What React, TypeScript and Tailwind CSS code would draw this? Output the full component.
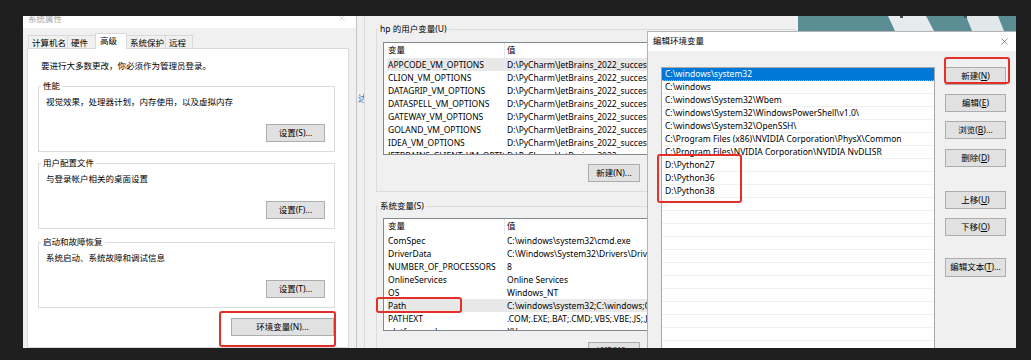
import { X } from "lucide-react";

const userVars: [string, string][] = [
  ["APPCODE_VM_OPTIONS", "D:\\PyCharm\\JetBrains_2022_success\\vmoptions\\appcode.vmoptions"],
  ["CLION_VM_OPTIONS", "D:\\PyCharm\\JetBrains_2022_success\\vmoptions\\clion.vmoptions"],
  ["DATAGRIP_VM_OPTIONS", "D:\\PyCharm\\JetBrains_2022_success\\vmoptions\\datagrip.vmoptions"],
  ["DATASPELL_VM_OPTIONS", "D:\\PyCharm\\JetBrains_2022_success\\vmoptions\\dataspell.vmoptions"],
  ["GATEWAY_VM_OPTIONS", "D:\\PyCharm\\JetBrains_2022_success\\vmoptions\\gateway.vmoptions"],
  ["GOLAND_VM_OPTIONS", "D:\\PyCharm\\JetBrains_2022_success\\vmoptions\\goland.vmoptions"],
  ["IDEA_VM_OPTIONS", "D:\\PyCharm\\JetBrains_2022_success\\vmoptions\\idea.vmoptions"],
  ["JETBRAINS_CLIENT_VM_OPTIONS", "D:\\PyCharm\\JetBrains_2022_success\\vmoptions\\client.vmoptions"],
];

const sysVars: [string, string][] = [
  ["ComSpec", "C:\\windows\\system32\\cmd.exe"],
  ["DriverData", "C:\\Windows\\System32\\Drivers\\DriverData"],
  ["NUMBER_OF_PROCESSORS", "8"],
  ["OnlineServices", "Online Services"],
  ["OS", "Windows_NT"],
  ["Path", "C:\\windows\\system32;C:\\windows;C:\\windows\\System32\\Wbem;"],
  ["PATHEXT", ".COM;.EXE;.BAT;.CMD;.VBS;.VBE;.JS;.JSE;.WSF;.WSH;.MSC"],
  ["platformcode", "KV"],
];

const paths = [
  "C:\\windows\\system32",
  "C:\\windows",
  "C:\\windows\\System32\\Wbem",
  "C:\\windows\\System32\\WindowsPowerShell\\v1.0\\",
  "C:\\windows\\System32\\OpenSSH\\",
  "C:\\Program Files (x86)\\NVIDIA Corporation\\PhysX\\Common",
  "C:\\Program Files\\NVIDIA Corporation\\NVIDIA NvDLISR",
  "D:\\Python27",
  "D:\\Python36",
  "D:\\Python38",
];

function Btn({ children, className = "" }: { children: React.ReactNode; className?: string }) {
  return (
    <div
      className={
        "flex items-center justify-center h-[18px] bg-[#e1e1e1] border border-[#adadad] whitespace-nowrap leading-none " +
        className
      }
    >
      {children}
    </div>
  );
}

function Group({ title, desc, btn, className = "" }: { title: string; desc: string; btn: string; className?: string }) {
  return (
    <fieldset className={"border border-[#dcdcdc] flex flex-col " + className}>
      <legend className="ml-[2px] px-[2px] leading-[12px]">{title}</legend>
      <div className="ml-[7px] mt-[4px] leading-[12px]">{desc}</div>
      <Btn className="self-end w-[59px] mt-[16px] mb-[9px] mr-[9px]">{btn}</Btn>
    </fieldset>
  );
}

function VarList({ rows, selected }: { rows: [string, string][]; selected: number }) {
  return (
    <div className="ml-[6px] w-[400px] h-[113px] bg-white border border-[#828790] overflow-hidden flex flex-col">
      <div className="flex h-[15px] items-center shrink-0">
        <div className="w-[120px] pl-[4px]">变量</div>
        <div className="h-full flex items-center border-l border-[#e5e5e5] pl-[2px]">值</div>
      </div>
      {rows.map(([n, v], i) =>
        i === selected ? (
          <div key={n} className="flex h-[13px] leading-[13px] shrink-0 whitespace-nowrap bg-[#e8e8e8] ml-[3px]">
            <div className="w-[117px] pl-[1px] overflow-hidden">{n}</div>
            <div className="pl-[3px]">{v}</div>
          </div>
        ) : (
          <div key={n} className="flex h-[13px] leading-[13px] shrink-0 whitespace-nowrap">
            <div className="w-[120px] pl-[4px] overflow-hidden">{n}</div>
            <div className="pl-[3px]">{v}</div>
          </div>
        ),
      )}
    </div>
  );
}

function LeftWindow() {
  const tabs: [string, number, boolean][] = [
    ["计算机名", 40, false],
    ["硬件", 29, false],
    ["高级", 32, true],
    ["系统保护", 40, false],
    ["远程", 28, false],
  ];
  return (
    <div className="absolute left-[23px] top-[16px] w-[333px] h-[332px] flex flex-col bg-[#f0f0f0] overflow-hidden">
      <div className="h-[12px] shrink-0 bg-white flex justify-between pl-[5px] pr-[9px] overflow-hidden text-[#a8a8a8]">
        <span className="leading-[8px] -mt-[1px]">系统属性</span>
        <X size={10} strokeWidth={1} className="-mt-[3px]" />
      </div>
      <div className="flex-1 flex flex-col pl-[4px] pr-[7px] pt-[5px]">
        <div className="flex items-end h-[15px] pl-[1px]">
          {tabs.map(([t, w, sel], i) => (
            <div
              key={t}
              style={{ width: w }}
              className={
                "border border-b-0 border-[#d9d9d9] whitespace-nowrap " +
                (i > 0 ? "-ml-px " : "") +
                (sel
                  ? "h-[16px] -mb-px bg-white relative z-10 pl-[4px] leading-[14px]"
                  : "h-[13px] bg-[#f0f0f0] pl-[3px] leading-[13px]")
              }
            >
              {t}
            </div>
          ))}
        </div>
        <div className="flex-1 bg-white border border-[#d9d9d9] flex flex-col pl-[10px] pr-[13px] pt-[11px]">
          <div className="ml-[3px] leading-[12px]">要进行大多数更改，你必须作为管理员登录。</div>
          <Group className="mt-[8px]" title="性能" desc="视觉效果，处理器计划，内存使用，以及虚拟内存" btn="设置(S)..." />
          <Group className="mt-[5px]" title="用户配置文件" desc="与登录帐户相关的桌面设置" btn="设置(F)..." />
          <Group className="mt-[7px]" title="启动和故障恢复" desc="系统启动、系统故障和调试信息" btn="设置(T)..." />
          <Btn className="self-end w-[103px] mt-[10px] mr-[1px]">环境变量(N)...</Btn>
        </div>
      </div>
    </div>
  );
}

function MiddleWindow() {
  return (
    <div className="absolute left-[364px] top-[16px] w-[434px] h-[332px] bg-[#f0f0f0] border-l border-[#dadada] overflow-hidden flex flex-col pl-[11px]">
      <fieldset className="mt-[7px] w-[420px] border border-[#dcdcdc] flex flex-col">
        <legend className="ml-[1px] px-[2px] leading-[12px]">hp 的用户变量(U)</legend>
        <div className="mt-[7px]">
          <VarList rows={userVars} selected={0} />
        </div>
        <div className="flex gap-[7px] ml-[211px] mt-[9px] mb-[9px]">
          <Btn className="w-[52px]">新建(N)...</Btn>
          <Btn className="w-[52px]">编辑(E)...</Btn>
          <Btn className="w-[52px]">删除(D)</Btn>
        </div>
      </fieldset>
      <fieldset className="mt-[8px] w-[420px] border border-[#dcdcdc] flex flex-col">
        <legend className="ml-[1px] px-[2px] leading-[12px]">系统变量(S)</legend>
        <div className="mt-[6px]">
          <VarList rows={sysVars} selected={5} />
        </div>
        <div className="flex gap-[7px] ml-[211px] mt-[11px] mb-[9px]">
          <Btn className="w-[52px]">新建(W)...</Btn>
          <Btn className="w-[52px]">编辑(I)...</Btn>
          <Btn className="w-[52px]">删除(L)</Btn>
        </div>
      </fieldset>
    </div>
  );
}

function Mn({ label, k, tail = "" }: { label: string; k: string; tail?: string }) {
  return (
    <span>
      {label}(<span className="underline">{k}</span>){tail}
    </span>
  );
}

function RightWindow() {
  const rows = [...paths, ...Array(14).fill("")];
  return (
    <div className="absolute left-[647px] top-[31px] w-[369px] h-[317px] flex flex-col bg-[#f0f0f0] border-l border-t border-[#b4b4b4] overflow-hidden">
      <div className="h-[19px] shrink-0 bg-white flex items-center justify-between pl-[5px] pr-[6px]">
        <span>编辑环境变量</span>
        <X size={11} strokeWidth={1.2} className="text-[#333]" />
      </div>
      <div className="flex-1 flex pl-[13px] pt-[16px]">
        <div className="w-[274px] h-[330px] bg-white border border-[#a8a8a8] flex flex-col">
          {rows.map((p, i) => (
            <div
              key={i}
              className={
                "h-[13px] shrink-0 leading-[12px] pl-[3px] whitespace-nowrap border-b " +
                (i === 0 ? "bg-[#0078d7] text-white border-dotted border-[#e9a25a]" : "border-[#f0f0f0]")
              }
            >
              {p}
            </div>
          ))}
        </div>
        <div className="ml-[10px] w-[61px] flex flex-col">
          <Btn>
            <Mn label="新建" k="N" />
          </Btn>
          <Btn className="mt-[9px]">
            <Mn label="编辑" k="E" />
          </Btn>
          <Btn className="mt-[9px]">
            <Mn label="浏览" k="B" tail="..." />
          </Btn>
          <Btn className="mt-[10px]">
            <Mn label="删除" k="D" />
          </Btn>
          <Btn className="mt-[24px]">
            <Mn label="上移" k="U" />
          </Btn>
          <Btn className="mt-[9px]">
            <Mn label="下移" k="O" />
          </Btn>
          <Btn className="mt-[22px] h-[19px]">
            <Mn label="编辑文本" k="T" tail="..." />
          </Btn>
        </div>
      </div>
    </div>
  );
}

export default function App() {
  return (
    <div className="relative w-[1031px] h-[360px] bg-[#1f1f1f] overflow-hidden text-[8.5px] text-black font-['Noto_Sans','Noto_Sans_CJK_SC',sans-serif]">
      {/* desktop wallpaper peeking above the dialogs */}
      <div className="absolute left-[798px] top-[16px] w-[218px] h-[15px] bg-[#5b8d94] overflow-hidden">
        <svg className="w-[218px] h-[15px]" viewBox="0 0 218 15">
          <polygon points="90,0 128,0 136,15 97,15" fill="#e6ecee" />
          <polygon points="168,0 200,0 206,15 174,15" fill="#e1e8ea" />
          <rect x="102" y="0" width="3" height="2" fill="#4a5558" />
          <rect x="166" y="0" width="3" height="2" fill="#4a5558" />
        </svg>
      </div>
      {/* sliver of a window behind */}
      <div className="absolute left-[356px] top-[16px] w-[9px] h-[332px] bg-[#f0f0f0] border-l border-[#c4c4c4] overflow-hidden">
        <span className="absolute left-[1px] top-[76px] text-[#2f6fc4] text-[9px]">达</span>
      </div>
      <MiddleWindow />
      <LeftWindow />
      <RightWindow />
      {/* red annotation boxes */}
      <div className="absolute left-[219px] top-[311px] w-[117px] h-[36px] border-2 border-[#e5302a] rounded-[3px]" />
      <div className="absolute left-[376px] top-[297px] w-[86px] h-[16px] border-2 border-[#e5302a] rounded-[3px]" />
      <div className="absolute left-[657px] top-[154px] w-[85px] h-[49px] border-2 border-[#e5302a] rounded-[3px]" />
      <div className="absolute left-[944px] top-[57px] w-[66px] h-[27px] border-2 border-[#e5302a] rounded-[3px]" />
    </div>
  );
}
